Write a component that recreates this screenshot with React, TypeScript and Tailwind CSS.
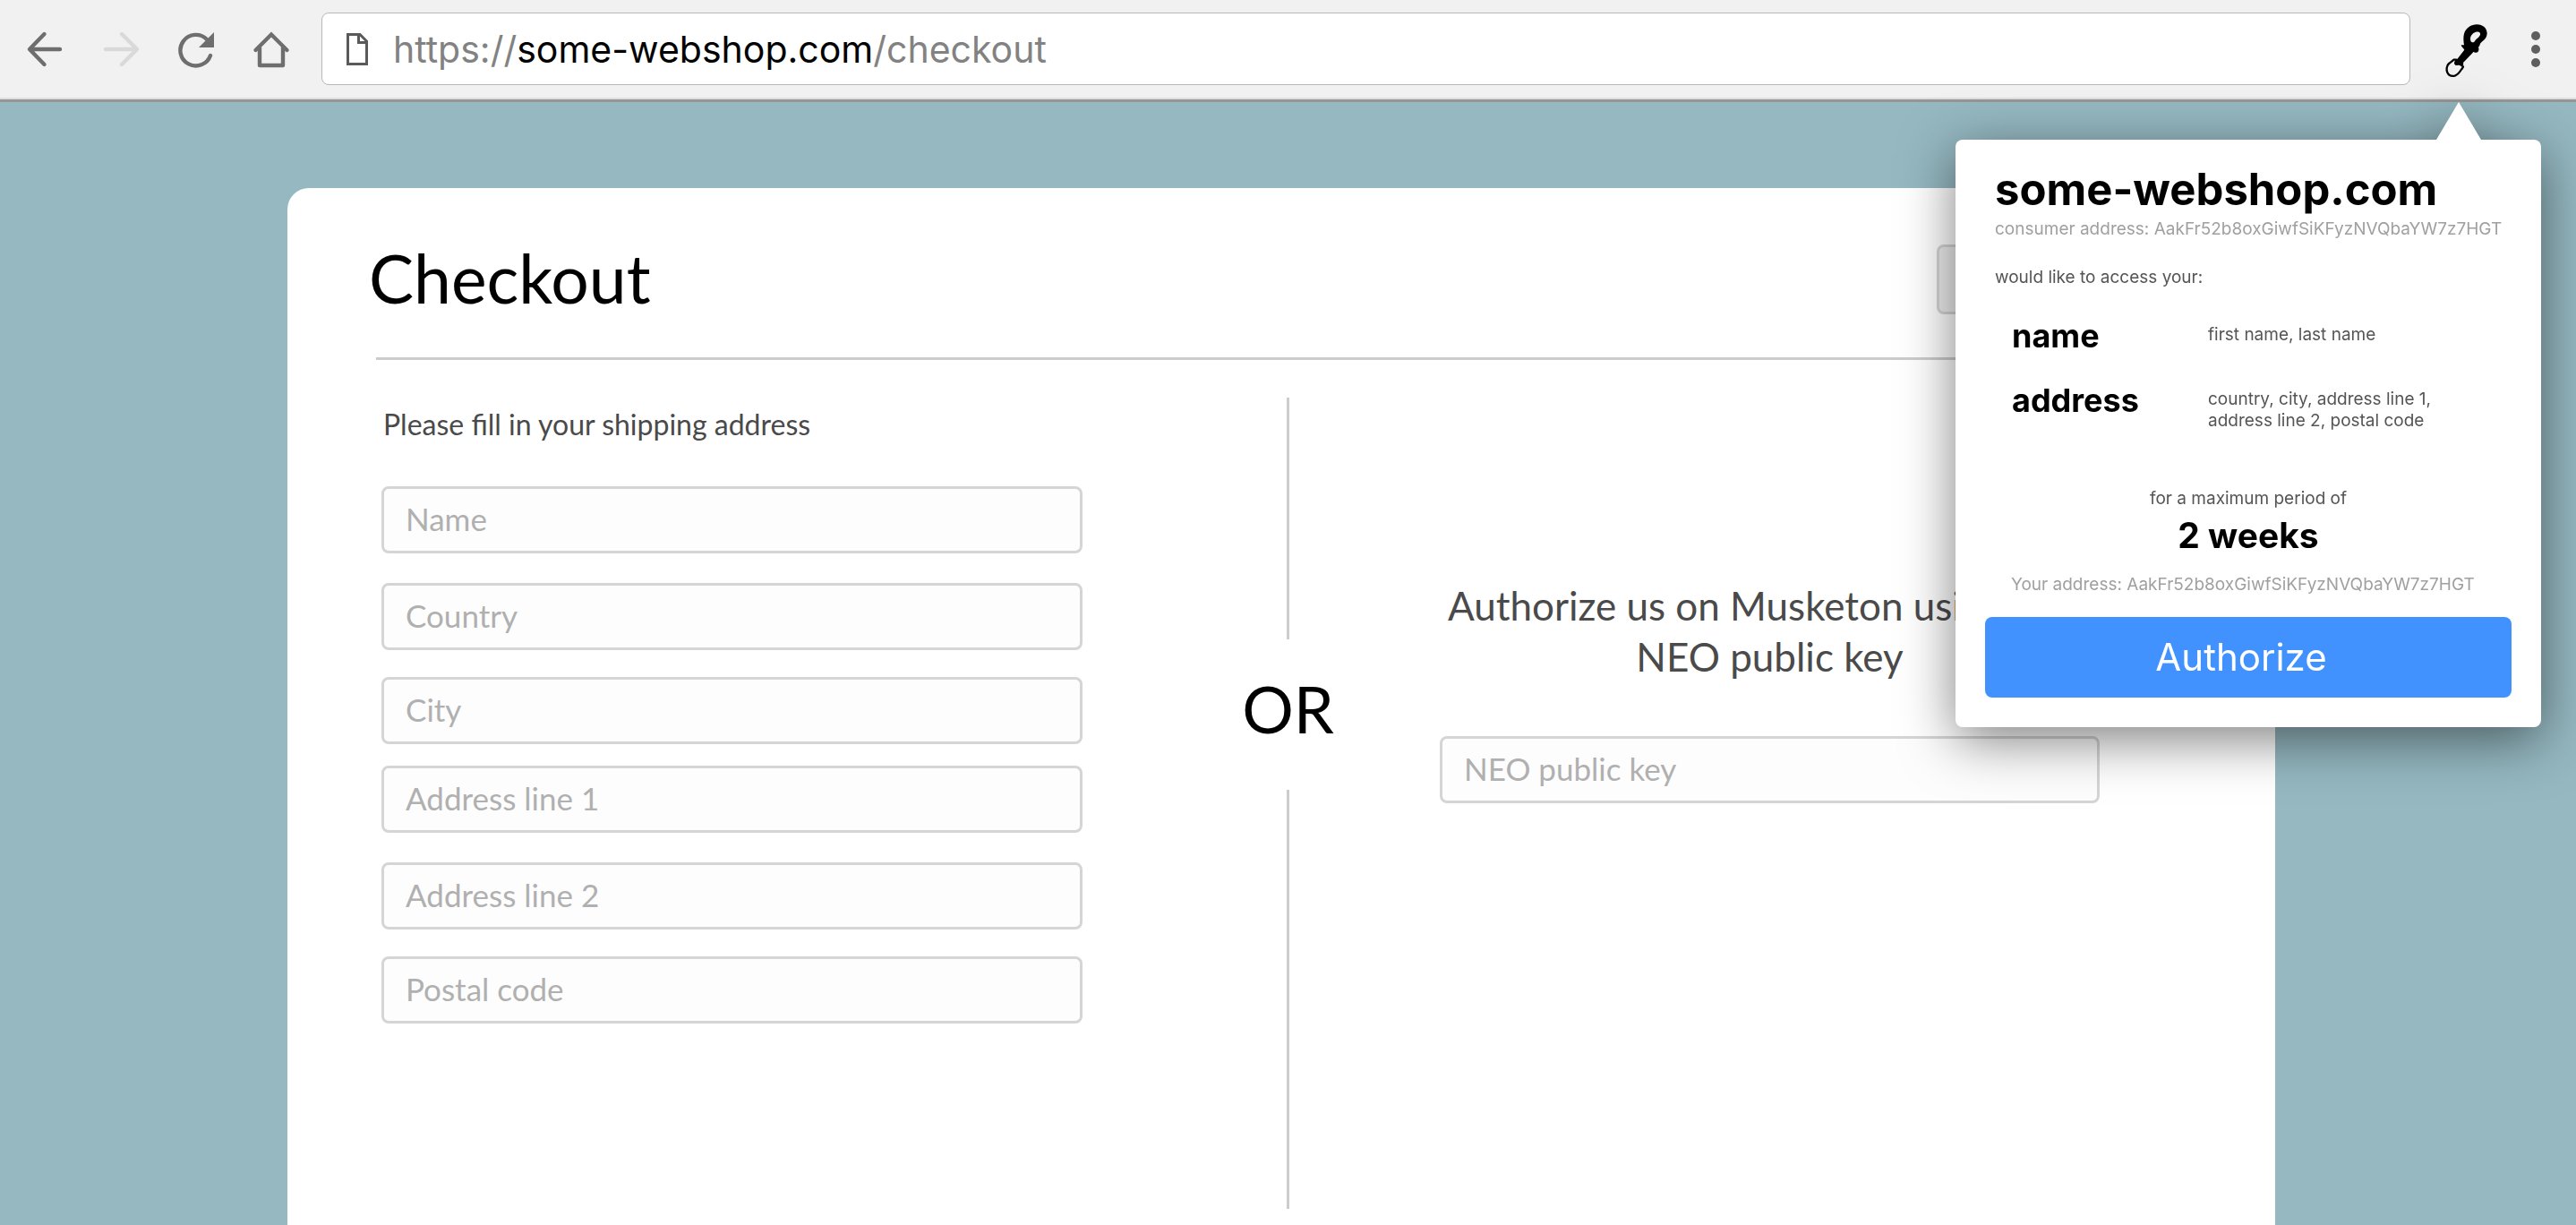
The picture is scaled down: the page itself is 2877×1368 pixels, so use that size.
import React from 'react';

const INPUT =
  'block h-[75px] w-full rounded-lg border-3 border-[#d5d5d5] bg-[#fdfdfd] px-6 pb-1 text-[35px] text-[#444] outline-none placeholder:text-[#b0b0b0] placeholder:opacity-100';

function Field({ label }: { label: string }) {
  return <input type="text" aria-label={label} placeholder={label} className={INPUT} />;
}

function BackIcon() {
  return (
    <svg width="44" height="44" viewBox="0 0 44 44" fill="none" stroke="currentColor" strokeWidth="4.4" strokeLinecap="round" strokeLinejoin="round">
      <path d="M38 22H5M20.500 5 4 22l16.500 17" />
    </svg>
  );
}

function ForwardIcon() {
  return (
    <svg width="44" height="44" viewBox="0 0 44 44" fill="none" stroke="currentColor" strokeWidth="4.4" strokeLinecap="round" strokeLinejoin="round">
      <path d="M5 22h33M23 5l17 17-17 17" />
    </svg>
  );
}

function ReloadIcon() {
  return (
    <svg width="44" height="44" viewBox="0 0 44 44" fill="none">
      <path d="M34 11A17.300 17.300 0 1 0 38 29" stroke="currentColor" strokeWidth="4.4" strokeLinecap="round" />
      <path d="M42 3v17H25z" fill="currentColor" />
    </svg>
  );
}

function HomeIcon() {
  return (
    <svg width="44" height="44" viewBox="0 0 44 44" fill="none" stroke="currentColor" strokeWidth="4.4" strokeLinecap="round" strokeLinejoin="round">
      <path d="M4.500 23 22 5.500 39.500 23" strokeLinejoin="miter" />
      <path d="M9 20v20h26V20" />
    </svg>
  );
}

function PageIcon() {
  return (
    <svg width="24" height="36" viewBox="0 0 24 36" fill="none" stroke="#5a5a5a" strokeWidth="3">
      <path d="M1.500 1.500H15l7.500 7.500v25.500h-21z" />
      <path d="M13.500 1.500v9h9" />
    </svg>
  );
}

function ClaspIcon() {
  return (
    <svg width="70" height="80" viewBox="0 0 210 240">
      <path
        fillRule="evenodd"
        d="M96 106C94 92 93 78 96 68c6-19 24-31 43-31 20 0 34 13 34 30 0 12-7 20-16 27-6 5-8 9-9 14l-4 5c3 8 1 18-8 18-4 0-6-1-8-3l-9 10-26 27c2 5 0 12-5 14-3-4-9-7-15-5-8 1-12-5-9-12 1-5 5-8 9-9l24-31c-3-6-10-9-11-16zm22-14c3 4 8 7 12 3 4-5 6-9 11-12 7-5 10-10 9-16-2-8-15-7-23-1-9 7-12 17-9 26z"
      />
      <path
        d="M70 155h-9c-4 5-10 8-16 13-8 7-9 22-5 30 5 10 16 13 25 11 8-3 16-12 21-20 3-5 7-7 7-11"
        fill="none"
        stroke="#000"
        strokeWidth="7"
        strokeLinecap="round"
        strokeLinejoin="round"
      />
    </svg>
  );
}

function MenuIcon() {
  return (
    <svg width="12" height="42" viewBox="0 0 12 42" fill="#5f5f5f">
      <circle cx="6" cy="6" r="5" />
      <circle cx="6" cy="21" r="5" />
      <circle cx="6" cy="36" r="5" />
    </svg>
  );
}

function Toolbar() {
  const btn = 'flex h-[60px] w-[60px] items-center justify-center';
  return (
    <header className="border-b-3 border-[#969696]">
      <div className="flex h-[111px] items-center border-b-2 border-[#dedede] bg-[#f1f1f1] pr-[15px] pl-[21px]">
        <nav className="flex gap-6 text-[#6e6e6e]">
          <button type="button" aria-label="Back" className={btn}><BackIcon /></button>
          <button type="button" aria-label="Forward" className="flex h-[60px] w-[60px] items-center justify-center text-[#d9d9d9]"><ForwardIcon /></button>
          <button type="button" aria-label="Reload" className={btn}><ReloadIcon /></button>
          <button type="button" aria-label="Home" className={btn}><HomeIcon /></button>
        </nav>
        <div className="ml-[26px] flex h-[81px] flex-1 items-center gap-7 rounded-lg border border-[#b8b8b8] bg-white pl-[27px]">
          <PageIcon />
          <div role="textbox" aria-label="Address" className="font-['Inter',sans-serif] text-[41px] leading-[48px] text-[#828282]">
            https://<span className="text-black">some-webshop.com</span>/checkout
          </div>
        </div>
        <button type="button" aria-label="Musketon" className="ml-7 flex h-[80px] w-[70px] items-center justify-center"><ClaspIcon /></button>
        <button type="button" aria-label="Menu" className="ml-3 flex h-[60px] w-[60px] items-center justify-center"><MenuIcon /></button>
      </div>
    </header>
  );
}

function Checkout() {
  return (
    <main className="mt-24 mr-[336px] ml-[321px] flex-1 rounded-t-3xl bg-white font-['Lato',sans-serif]">
      <div className="flex items-start justify-between pt-[60px] pr-[99px] pb-12 pl-[91px]">
        <h1 className="text-[75px] leading-[80px] text-black">Checkout</h1>
        <button type="button" aria-label="Account" className="mt-[3px] h-[78px] w-[279px] rounded-lg border-3 border-[#d5d5d5] bg-[#efefef]" />
      </div>
      <hr className="mx-[99px] border-t-3 border-[#ccc]" />
      <div className="grid grid-cols-[783fr_399fr_737fr] pr-[196px] pl-[105px]">
        <form className="pt-[52px]">
          <p className="pl-[2px] text-[32px] leading-[40px] text-[#4a4a4a]">Please fill in your shipping address</p>
          <div className="mt-[49px] flex flex-col gap-6">
            <div>
              <Field label="Name" />
              <div className="mt-[33px]"><Field label="Country" /></div>
              <div className="mt-[30px]"><Field label="City" /></div>
            </div>
            <div>
              <Field label="Address line 1" />
              <div className="mt-[33px]"><Field label="Address line 2" /></div>
              <div className="mt-[30px]"><Field label="Postal code" /></div>
            </div>
          </div>
        </form>
        <div className="flex flex-col items-center pt-[42px] pl-[60px]">
          <div className="h-[270px] w-[3px] bg-[#ccc]" />
          <div className="flex h-[168px] items-center pb-[14px] text-[72px] text-black">OR</div>
          <div className="h-[468px] w-[3px] bg-[#ccc]" />
        </div>
        <form className="pt-[246px]">
          <p className="text-center text-[44px] leading-[57px] text-[#4a4a4a]">
            Authorize us on Musketon using your
            <br />
            NEO public key
          </p>
          <div className="mt-[60px]"><Field label="NEO public key" /></div>
        </form>
      </div>
    </main>
  );
}

function AuthorizePopup() {
  return (
    <section
      aria-label="Authorization request"
      className="absolute top-[114px] right-[39px] w-[654px] font-['Inter',sans-serif] text-[19px] leading-6 text-[#555] drop-shadow-[0_14px_30px_rgba(0,0,0,0.5)]"
    >
      <svg width="50" height="42" viewBox="0 0 50 42" className="mr-[67px] ml-auto block" fill="#fff">
        <path d="M25 0 50 42H0z" />
      </svg>
      <div className="rounded-lg bg-white px-[33px] pt-[26px] pb-[33px]">
        <div className="px-[11px]">
          <h2 className="text-[49px] leading-[60px] font-bold text-black">some-webshop.com</h2>
          <p className="mt-[2px] whitespace-nowrap text-[#a0a0a0]">consumer address: AakFr52b8oxGiwfSiKFyzNVQbaYW7z7HGT</p>
          <p className="mt-[30px]">would like to access your:</p>
        </div>
        <dl className="mt-[40px] grid grid-cols-[219px_1fr] gap-y-[45px] pl-[30px]">
          <dt className="text-[36px] leading-[27px] font-bold text-black">name</dt>
          <dd>first name, last name</dd>
          <dt className="text-[36px] leading-[27px] font-bold text-black">address</dt>
          <dd>
            country, city, address line 1,
            <br />
            address line 2, postal code
          </dd>
        </dl>
        <p className="mt-[63px] text-center">for a maximum period of</p>
        <p className="mt-[5px] text-center text-[39px] leading-[48px] font-bold text-black">2 weeks</p>
        <p className="mt-[19px] pl-[29px] whitespace-nowrap text-[#a0a0a0]">Your address: AakFr52b8oxGiwfSiKFyzNVQbaYW7z7HGT</p>
        <button type="button" className="mt-6 h-[90px] w-full rounded-lg bg-[#4192ff] pr-4 text-[42px] text-white">
          Authorize
        </button>
      </div>
    </section>
  );
}

export default function App() {
  return (
    <div className="relative flex h-screen min-h-[700px] flex-col overflow-hidden bg-[#95b8c1]">
      <Toolbar />
      <Checkout />
      <AuthorizePopup />
    </div>
  );
}
